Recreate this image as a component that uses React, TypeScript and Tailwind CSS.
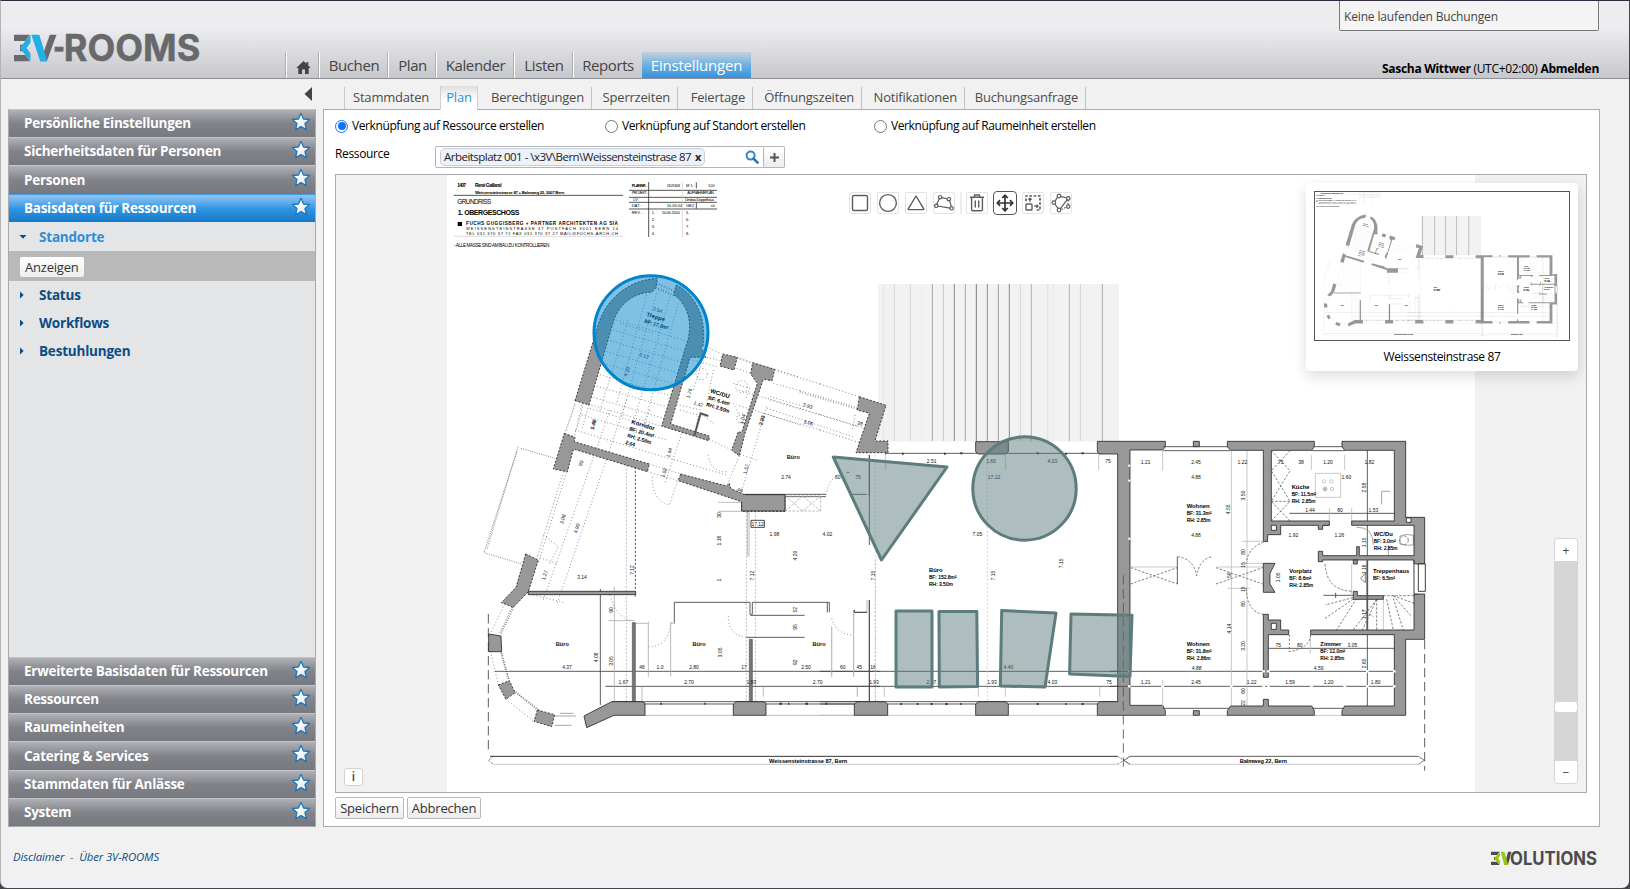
import React from "react";

const W = "#989898";

type Lbl = [number, number, string, number?];

function Dims({ items, size = 15, bold = false }: { items: Lbl[]; size?: number; bold?: boolean }) {
  return (
    <g fill="#111" stroke="none" fontSize={size} fontFamily="Liberation Sans, sans-serif" fontWeight={bold ? 700 : 400} textAnchor="middle">
      {items.map(([x, y, t, r], i) => (
        <text key={i} x={x} y={y + size * 0.35} transform={r ? `rotate(${r} ${x} ${y})` : undefined}>
          {t}
        </text>
      ))}
    </g>
  );
}

function Room({ x, y, lines, rot = 0, size = 17.5 }: { x: number; y: number; lines: string[]; rot?: number; size?: number }) {
  return (
    <g transform={`translate(${x} ${y}) rotate(${rot})`} fill="#000" stroke="none" fontFamily="Liberation Sans, sans-serif">
      {lines.map((l, i) => (
        <text key={i} x={0} y={i * 21 + 6} fontSize={i ? size - 2.5 : size} fontWeight={i ? 400 : 700} stroke={i ? "#000" : "none"} strokeWidth={0.5}>
          {l}
        </text>
      ))}
    </g>
  );
}

const hatch: [number, string][] = [
  [190, "#e6e6e6"], [223, "#d8d8d8"], [271, "#d6d6d6"], [304, "#ececec"], [337, "#a4a4a4"], [370, "#c8c8c8"],
  [403, "#888"], [436, "#a8a8a8"], [469, "#7c7c7c"], [502, "#8c8c8c"], [535, "#a0a0a0"], [568, "#888"],
  [601, "#d6d6d6"], [634, "#b0b0b0"], [683, "#e2e2e2"], [700, "#e6e6e6"], [748, "#b4b4b4"], [781, "#d4d4d4"], [847, "#aaa"],
];

function Plan({ mini = false }: { mini?: boolean }) {
  const ws = mini ? 0 : 2.4;
  const wall = { fill: W, stroke: "#222", strokeWidth: ws };
  const tilt = { fill: W, stroke: "#111", strokeWidth: ws, strokeDasharray: "6 5" };
  const lop = mini ? 0.35 : 1;
  return (
    <g>
      <rect x={878} y={284} width={241} height={157.5} fill="#f2f2f2" />
      {/* title block */}
      <g transform="translate(440 170) scale(.33333)">
        <g fill="#000" fontFamily="Liberation Sans, sans-serif" fontSize="15">
          <text x="52" y="50" textLength="26" fontWeight="700">1407</text>
          <text x="105" y="50" textLength="80" fontWeight="700">René Gailland</text>
          <text x="105" y="71" textLength="268" fontSize="13" fontWeight="700">Weissensteinstrasse 87 + Balmweg 22, 3007 Bern</text>
          <text x="52" y="103" textLength="102" fontSize="19">GRUNDRISS</text>
          <text x="53" y="136" textLength="185" fontSize="21" fontWeight="700">1. OBERGESCHOSS</text>
          <rect x="53" y="156" width="13" height="12" />
          <text x="78" y="166" textLength="456" fontSize="14" fontWeight="700">FUCHS GUGGISBERG + PARTNER ARCHITEKTEN AG SIA</text>
          <text x="78" y="180" textLength="456" fontSize="12">WEISSENSTEINSTRASSE 47 POSTFACH 3001 BERN 14</text>
          <text x="78" y="195" textLength="456" fontSize="12">TEL 031 370 37 71 FAX 031 370 37 27 MAIL@FUCHS-ARCH.CH</text>
          <text x="42" y="231" textLength="286" fontSize="14">- ALLE MASSE SIND AM BAU ZU KONTROLLIEREN</text>
          {!mini && (
            <g fontSize="12">
              <text x="575" y="50" textLength="44" fontWeight="700">PLANNR.</text><text x="680" y="50" textLength="40">1107403</text><text x="738" y="50">M 1 :</text><text x="804" y="50">100</text>
              <text x="575" y="71" textLength="48">PROJEKT :</text><text x="742" y="71" textLength="80">AUFNAHMEPLAN</text>
              <text x="580" y="92">LV</text><text x="735" y="92" textLength="88">Umbau Doppelhaus</text>
              <text x="575" y="112">DAT. :</text><text x="680" y="112">10.05.04</text><text x="738" y="112">GEZ</text><text x="812" y="112">sh</text>
              <text x="575" y="132">REV. :</text><text x="635" y="132">1.</text><text x="665" y="132" textLength="54">10.06.2004</text><text x="738" y="132">5.</text>
              <text x="635" y="153">2.</text><text x="738" y="153">6.</text><text x="635" y="174">3.</text><text x="738" y="174">7.</text><text x="635" y="195">4.</text><text x="738" y="195">8.</text>
            </g>
          )}
        </g>
        <path d="M41 76H549M567 61H831M567 82H831M567 97H831M567 117H831M626 36V201M769 37V55M769 98V116" stroke="#333" strokeWidth="2.5" opacity={lop} fill="none" />
        <path d="M41 199H549M727 36V201" stroke="#ccc" strokeWidth="2" fill="none" />
      </g>
      {/* terrace */}
      <g transform="translate(820 180) scale(.33333)">
        {hatch.filter((_, i) => !mini || i % 4 === 0).map(([x, c]) => (
          <rect key={x} x={x - 1.5} y={312} width={mini ? 8 : 3} height={471} fill={mini ? "#a5a5a5" : c} />
        ))}
        <path d="M0 612L118 650M0 703L145 748M0 750L135 793M105 705L97 750M0 612L-250 534M0 703L-250 628M0 750L-250 675" stroke="#555" strokeWidth="2.2" strokeDasharray="3 7" fill="none" opacity={lop} />
        <path d="M-60 635L114 686" stroke="#888" strokeWidth="9" strokeDasharray="2 6" fill="none" opacity={lop} />
        <path d="M118 650L198 676L165 783H204V818H108L148 700L112 690Z" {...tilt} />
      </g>
      {/* stair tower */}
      <g transform="translate(440 170) scale(.33333)">
        <g fill="none" stroke="#666" strokeWidth="2.2" strokeDasharray="3 7" opacity={lop}>
          <path d="M530 450L748 515M520 480L740 545M510 512L730 578M500 545L722 612M490 580L712 645M480 614L700 680M470 648L690 714M460 682L680 748M450 716L600 760" />
          <path d="M620 375L530 700M650 370L545 740M690 380L580 760M565 450L480 720M715 400L610 770M540 460L640 490" />
          <path d="M650 340L705 365M640 350L703 377" strokeWidth="7" strokeDasharray="2 6" />
          <path d="M808 535L845 552M892 562L936 578M1004 598L1080 622M800 562L840 572M890 595L932 610M1000 640L1080 662M990 680L1080 706M970 730L1080 765" />
          <path d="M405 700L380 780M447 705L425 780M430 700L410 780M720 720L775 735L765 790M750 562L700 720M760 570L830 590M820 600L800 700" />
          <circle cx="785" cy="612" r="17" /><circle cx="905" cy="650" r="18" /><circle cx="905" cy="745" r="15" /><path d="M785 580L760 660M880 640L930 655L915 690M700 700L780 720" />
        </g>
        <path d="M405 692L470 480C490 395 560 330 652 325L648 352L636 366C570 370 535 410 520 455L447 705Z" {...tilt} />
        <path d="M708 345C765 372 800 440 789 528L782 530L797 562L750 562L692 762L808 798L806 812L665 768L745 505C757 450 740 400 702 375Z" {...tilt} />
        <path d="M848 552L892 562L882 600L840 588Z" {...tilt} />
        <path d="M938 578L1004 598L996 632L970 628L915 790L898 858L875 840L895 785L905 788L952 640L932 612Z" {...tilt} />
        <path d="M763 797L782 730L805 738" stroke="#555" strokeWidth="6" fill="none" />
        <Room x={620} y={432} rot={17} lines={["Treppe", "BF: 17.0m²"]} />
        <Room x={812} y={662} rot={17} lines={["WC/DU", "BF: 6.4m²", "RH: 2.50m"]} />
        <Room x={575} y={755} rot={17} lines={["Korridor", "BF: 20.4m²", "RH: 2.58m", "2.64"]} size={18} />
        {!mini && (
          <Dims items={[[748, 670, "1.76", -73], [775, 703, "1.47", 17], [908, 747, "1.04", -73], [966, 750, "2.03", -73], [460, 765, "1.48", -73], [653, 420, "2.54", 17], [612, 557, "3.12", 17], [560, 605, "4.19", -73]]} />
        )}
      </g>
      {/* west wing */}
      <g transform="translate(460 400) scale(.33333)">
        <g fill="none" stroke="#666" strokeWidth="2.2" strokeDasharray="3 7" opacity={lop}>
          <path d="M345 15L313 100M365 15L343 112M385 12L650 92M365 45L620 120M345 90L610 170L800 225M450 30L250 600M500 0L290 615M310 215L232 470M340 150L235 490M250 405L295 440L270 490M230 470L295 492M220 585L310 607M568 192L662 222M562 215L655 242M668 92L615 250M748 118L815 150M838 168L800 258M920 20L840 290M890 180L815 155M930 0L1195 80M920 25L1180 110M570 30L545 90M760 70L720 40M820 10L850 70" />
          <path d="M183 145L285 175M175 140L72 458L185 492M170 155L80 450" strokeDasharray="3 4" stroke="#555" />
          <path d="M577 230Q575 300 628 315L655 235M745 165Q750 215 800 215M450 585Q470 660 525 662M565 740Q625 740 632 670M805 648Q805 712 870 712M1115 655Q1130 705 1180 705M1098 285Q1105 240 1140 220" />
          <path d="M130 620L92 700M155 622L118 700M92 755L115 855M123 755L148 842M138 898L222 964M165 878L240 930" />
          <path d="M162 872L240 935M124 760L146 840M160 622L122 702" strokeWidth="6" strokeDasharray="2 5" />
          <path d="M85 642V1050" strokeDasharray="28 14" stroke="#444" strokeWidth="2.6" />
          <path d="M499 195V905M859 335V905M886 335V905M1246 480V905" stroke="#aaa" strokeDasharray="6 5" />
          <path d="M526 200V570" stroke="#555" strokeDasharray="7 5" strokeWidth="3" />
        </g>
        <g fill="none" stroke="#444" strokeWidth="2.6" opacity={lop}>
          <path d="M104 814H1260M436 859H1260M421 567V915M643 670V607H870V643H877V607H1108V637M1102 607V637M871 646H1034M860 712H1034M850 283H975M975 283H1098M975 290H1098M1228 165V290M1228 600V905M555 912H820M918 912H1183M1183 637H1221M1183 630V637M205 528V574M526 584V590" />
          <path d="M455 905H1200" />
          <path d="M285 948H348M285 976H335M300 940H340" stroke="#999" />
        </g>
        <g fill="none" stroke="#aaa" strokeWidth="2.4" opacity={lop}>
          <path d="M463 560V920M565 665V830M632 665V830M526 670H565M632 670H643M862 335V470M867 335V470M1115 680V830M1181 637V830M446 662H520M555 946H820M918 946H1183M775 307H850M775 334H845M1221 637V600" />
          <path d="M976 288H1082V333H976ZM976 288L1028 333L1082 288M976 333L1028 288L1082 333" strokeDasharray="8 4" />
          <path d="M910 860V890M1192 860V890M546 860V905" />
        </g>
        <path d="M601 908h5v6h-5zM733 908h4v6h-4zM958 908h8v6h-8zM984 908h4v6h-4zM1036 908h8v6h-8zM1096 908h6v6h-6z" fill="#333" />
        <path d="M313 100L345 112L343 125L568 192L562 215L340 147L322 215L280 207Z" {...tilt} />
        <path d="M662 222L800 258L808 250L812 265L855 285H975V334H845V305L655 242Z" {...tilt} />
        <path d="M855 284H975V333H845V306" {...wall} />
        <path d="M197 462L235 480L205 575L160 622L124 608L168 562Z" {...tilt} />
        <path d="M205 574H527V584H205Z" {...wall} />
        <path d="M517 668H526V905H517ZM868 718H877V905H868Z" fill="#777" stroke="#555" strokeWidth="2" />
        <path d="M86 702L123 708L125 755H86Z" {...wall} />
        <path d="M115 855L148 842L165 878L138 898ZM232 930L284 944L275 980L222 964Z" {...tilt} />
        <path d="M372 948L455 905H546L555 910V946H462L380 983Z" {...wall} />
        <path d="M828 905H910L918 910V946H820V912Z" {...wall} />
        <Dims bold size={17} items={[[1000, 172, "Büro"], [307, 733, "Büro"], [717, 733, "Büro"], [1077, 733, "Büro"]]} />
        {!mini && <>
          <path d="M873 361H913V382H873Z" fill="#fff" stroke="#222" strokeWidth="2.5" />
          <Dims items={[[893, 372, "17.12"], [978, 232, "2.74"], [1133, 232, "60"], [1194, 232, "75"], [943, 403, "1.98"], [1102, 403, "4.02"], [366, 532, "3.14"], [321, 802, "4.37"], [546, 802, "46"], [600, 802, "1.0"], [702, 802, "2.80"], [852, 802, "17"], [1038, 802, "2.50"], [1148, 803, "60"], [1198, 803, "45"], [1239, 803, "16"], [490, 848, "1.67"], [687, 848, "2.70"], [874, 848, "1.93"], [1073, 848, "2.70"], [1242, 848, "1.93"],
            [410, 772, "4.08", -90], [453, 783, "3.05", -90], [453, 630, "90", -90], [779, 345, "30", -90], [779, 422, "1.16", -90], [779, 540, "1", -90], [781, 757, "3.05", -90], [878, 527, "7.12", -90], [1006, 467, "4.20", -90], [1006, 629, "52", -90], [1006, 681, "95", -90], [1006, 787, "92", -90], [1240, 527, "7.15", -90], [308, 357, "3.08", -73], [350, 385, "4.90", -73], [254, 525, "1.27", -73], [363, 190, "90", -73], [400, 72, "1.48", -73], [628, 158, "1.94", -73], [858, 207, "1.57", -73], [905, 62, "2.03", -73], [1043, 18, "2.93", 17], [1045, 68, "3.06", 17], [1200, 70, "38", 17], [612, 218, "1.02", -73], [840, 270, "46", 17], [517, 510, "7.12", -90]]} />
        </>}
      </g>
      {/* main hall */}
      <g transform="translate(820 430) scale(.33333)">
        <g fill="none" stroke="#444" strokeWidth="2.6" opacity={lop}>
          <path d="M0 724H900M0 769H900M148 75V345M148 510V815M0 815H905M0 822H112M203 822H475M557 822H839M197 70H475M557 70H839M197 66V74M839 66V74M102 547H141M102 540V547M80 127H88M95 193H141" />
          <path d="M-990 979H893" strokeWidth="3" stroke="#333" />
        </g>
        <g fill="none" stroke="#bbb" strokeWidth="2.4" opacity={lop}>
          <path d="M166 75V815M502 75V815" strokeDasharray="5 7" />
          <path d="M101 545V740M35 590V740M0 856H103M203 856H467M565 856H832M-980 1003H893M196 75V120M556 75V120M836 75V120M839 770V800M475 770V800M193 770V800M112 770V800M556 770V800" />
          <path d="M893 979L930 1003M893 1003L930 979M-980 979L-995 991L-980 1003" stroke="#555" strokeDasharray="6 4" />
        </g>
        <path d="M246 68h5v6h-5zM372 68h5v6h-5zM421 67h6v6h-6zM650 67h6v6h-6zM736 68h5v6h-5zM785 67h6v6h-6zM241 819h5v6h-5zM290 819h5v6h-5zM332 819h6v6h-6zM376 819h7v6h-7zM421 819h4v6h-4zM650 819h6v6h-6zM736 819h4v6h-4zM785 819h6v6h-6z" fill="#333" />
        <path d="M103 822L112 815H194L203 822V856H103ZM467 822L475 815H557L565 822V856H467ZM467 35H565V65L557 72H475L467 65Z" {...wall} />
        <path d="M832 34H1036V50L1028 60H930V826H1028L1036 842V856H832V822L839 815H893V72H839L832 66Z" {...wall} />
        <Room x={327} y={421} lines={["Büro", "BF: 152.8m²", "RH: 3.50m"]} />
        <text x="-153" y="998" fontSize="17" fontWeight="700" fontFamily="Liberation Sans, sans-serif" textLength="235">
          Weissensteinstrasse 87, Bern
        </text>
        {!mini && (
          <Dims items={[[335, 95, "2.51"], [513, 95, "1.60"], [697, 95, "4.03"], [864, 95, "75"], [522, 143, "17.12"], [472, 314, "7.05"], [565, 712, "4.40"], [334, 758, "2.87"], [516, 758, "1.93"], [697, 758, "4.03"], [867, 758, "75"], [520, 437, "7.15", -90], [723, 400, "7.15", -90]]} />
        )}
        <path d="M910 436V1022" stroke="#555" strokeWidth="2.6" strokeDasharray="28 14" />
      </g>
      {/* east house */}
      <g transform="translate(1110 430) scale(.33333)">
        <g fill="none" stroke="#444" strokeWidth="2.6" opacity={lop}>
          <path d="M0 724H870M0 769H870M475 655H870M772 45V842M538 250H870M202 380V462M160 50H360M605 50H704M160 62H360M605 62H704M160 835H360M605 835H704M640 496H730M677 488V504M60 979H925M638 286H658" />
        </g>
        <g fill="none" stroke="#bbb" strokeWidth="2.4" opacity={lop}>
          <path d="M364 60V828M411 60V828M158 60V122M158 750V828M604 75V120M704 75V120M395 334H460M395 400H460M395 475H410M60 411H202M320 411H460M60 1003H925M268 856H352M167 856H250M613 856H696M658 234V273M725 234V273M601 614V670M352 475H420M820 500V600M725 402V500" />
          <path d="M616 130H692V202H616Z" />
          <circle cx="642" cy="154" r="5" /><circle cx="664" cy="154" r="5" /><circle cx="645" cy="177" r="6" fill="#bbb" /><circle cx="666" cy="177" r="5" />
        </g>
        <g fill="none" stroke="#555" strokeWidth="2.3" strokeDasharray="7 5" opacity={lop}>
          <path d="M62 413L202 462M62 462L202 413M318 413L458 462M318 462L458 413M202 380Q250 385 260 437Q270 385 308 380M473 334Q415 345 409 400M409 475Q410 545 460 553M645 402Q650 480 725 484M538 614V665Q600 655 602 614" />
          <path d="M484 62L540 122L484 214L540 273M540 62L484 122L540 214L484 273M484 214H540" />
          <path d="M740 500L645 525M740 500L645 565M740 505L680 600M800 508V600M800 508L757 600M800 508L730 600M850 497L912 520M850 497L905 560M850 505L880 600M830 508L850 600M820 497H912M757 540L790 560" />
          <path d="M815 223V184H840M790 345Q790 290 740 292M835 345V377" strokeDasharray="none" stroke="#888" />
          <path d="M870 318Q890 310 910 316V345Q890 348 870 342Z" strokeDasharray="none" stroke="#888" /><circle cx="882" cy="331" r="13" />
          <path d="M766 430L752 445L766 458V430M925 979L943 991L925 1003M60 979L42 991L60 1003" strokeDasharray="none" />
        </g>
        <path d="M944 630V1022" stroke="#444" strokeWidth="2.6" strokeDasharray="28 14" />
        <path d="M250 34H268V50H250ZM250 842H268V856H250Z" {...wall} />
        <path d="M352 34H613V50L605 61H484V273H658V286H638V298H625V286H512V314H473V334H460V61H362L352 50Z" {...wall} />
        <path d="M696 34H887V262H944V402H912V390H638V395H625V364H638V377H740V350H748V377H912V286H725V273H853V61H704L696 50Z" {...wall} />
        <path d="M912 492H944V628H887V856H696V842L704 828H853V614H602V600H912Z" {...wall} />
        <path d="M730 390H742V402H730ZM730 484H742V497H820V508H730ZM460 400H495L480 430V462L495 487H460Z" {...wall} />
        <path d="M460 553H475V570H512V600H536V614H475V742H460ZM460 808H475V828H605L613 842V856H352V842L362 828H460Z" {...wall} />
        <path d="M772 392V600" stroke="#555" strokeWidth="5" opacity={lop} />
        <path d="M484 286H499V301H484ZM484 580H499V598H484ZM889 264H903V277H889Z" fill="#fff" stroke="#222" strokeWidth={ws} />
        <path d="M925 402H946V484H925ZM912 392V492H925" fill="#fff" stroke="#222" strokeWidth="2.6" />
        {!mini && (
          <g fill="#fff">
            {[58, 158, 364, 461, 475, 605, 704, 772, 853].map((x) => <circle key={x} cx={x} cy={769} r={4} />)}
            {[58, 461, 475, 772, 853].map((x) => <circle key={x} cx={x} cy={724} r={4} />)}
            {[107, 152, 326].map((y) => <circle key={y} cx={58} cy={y} r={3.5} />)}
          </g>
        )}
        <Room x={230} y={229} lines={["Wohnen", "BF: 31.3m²", "RH: 2.85m"]} />
        <Room x={230} y={643} lines={["Wohnen", "BF: 31.8m²", "RH: 2.86m"]} />
        <Room x={545} y={172} lines={["Küche", "BF: 11.5m²", "RH: 2.85m"]} />
        <Room x={791} y={313} lines={["WC/Du", "BF: 3.0m²", "RH: 2.85m"]} />
        <Room x={538} y={422} lines={["Vorplatz", "BF: 8.6m²", "RH: 2.85m"]} />
        <Room x={789} y={422} lines={["Treppenhaus", "BF: 6.5m²"]} />
        <Room x={631} y={643} lines={["Zimmer", "BF: 12.0m²", "RH: 2.85m"]} />
        <text x="389" y="998" fontSize="17" fontWeight="700" fontFamily="Liberation Sans, sans-serif" textLength="142">Balmweg 22, Bern</text>
        {!mini && (
          <Dims items={[[107, 97, "1.21"], [258, 97, "2.45"], [397, 97, "1.22"], [258, 143, "4.88"], [258, 316, "4.88"], [512, 97, "75"], [573, 97, "38"], [654, 97, "1.20"], [778, 97, "1.82"], [709, 142, "1.60"], [600, 240, "1.44"], [690, 240, "80"], [790, 240, "1.53"], [550, 316, "1.92"], [688, 316, "1.26"], [260, 714, "4.88"], [626, 714, "4.59"], [505, 645, "75"], [569, 645, "80"], [727, 645, "3.05"], [107, 758, "1.21"], [258, 758, "2.45"], [425, 758, "1.22"], [540, 758, "1.59"], [656, 758, "1.20"], [797, 758, "1.80"],
            [354, 238, "4.55", -90], [400, 197, "3.50", -90], [400, 366, "80", -90], [400, 405, "15", -90], [357, 436, "50", -90], [400, 478, "15", -90], [400, 522, "80", -90], [357, 596, "4.14", -90], [400, 648, "3.20", -90], [400, 783, "60", -90], [400, 819, "22", -90], [762, 173, "2.58", -90], [762, 337, "1.15", -90], [762, 418, "1.16", -90], [762, 553, "1.17", -90], [762, 700, "2.65", -90], [504, 442, "1.05", -90]]} />
        )}
      </g>
    </g>
  );
}

function Overlays() {
  const s = { fill: "rgba(93,124,126,0.5)", stroke: "#5d7c7e", strokeWidth: 3, strokeLinejoin: "round" as const };
  return (
    <g>
      <circle cx="651" cy="332.8" r="57" fill="rgba(0,132,203,0.5)" stroke="#0084cb" strokeWidth="3" />
      <path d="M833.3 457L947 467L881.5 560Z" {...s} />
      <circle cx="1024.5" cy="488.5" r="51.7" {...s} />
      <path d="M896 611H932V687H896ZM939 611.5H976.8L977.6 686.5L939.3 687ZM1001.7 610.5L1056 613L1045 687L1000.3 686ZM1071 614L1132 615.3L1130 676.5L1069.6 674Z" {...s} />
    </g>
  );
}

function Star() {
  return (
    <svg className="h-5 w-5" viewBox="0 0 20 20">
      <defs>
        <linearGradient id="starFill" x1="0" y1="0" x2="1" y2="1">
          <stop offset="0.4" stopColor="#fff" />
          <stop offset="1" stopColor="#d3d6da" />
        </linearGradient>
      </defs>
      <path d="M10 1.3L12.5 7L18.7 7.5L14 11.6L15.5 17.9L10 14.6L4.5 17.9L6 11.6L1.3 7.5L7.5 7Z" fill="url(#starFill)" stroke="#1c78bd" strokeWidth="1.3" strokeLinejoin="round" />
    </svg>
  );
}

function SideRow({ label, active = false, h = "h-[28px]" }: { label: string; active?: boolean; h?: string }) {
  return (
    <div
      className={`flex ${h} shrink-0 items-center justify-between border-t pr-[4px] pl-[15px] ${
        active ? "border-[#3f97dd] bg-linear-to-b from-[#92c5f3] via-[#2f96e2] to-[#1479c8]" : "border-[#c6c6ca] bg-linear-to-b from-[#b0b1b6] via-[#818389] to-[#777980]"
      }`}
    >
      <span className="text-[13.5px] font-bold tracking-[-0.27px] text-white">{label}</span>
      <span className="-mt-[4px]"><Star /></span>
    </div>
  );
}

function TreeRow({ label, open = false }: { label: string; open?: boolean }) {
  return (
    <div className={`flex h-[28px] items-center pl-[10px] ${open ? "pt-[2px] text-[#2a8fdc]" : "text-[#0b4c84]"}`}>
      <svg className="mr-[12px] h-[8px] w-[8px]" viewBox="0 0 8 8" fill="#0b4c84">
        {open ? <path d="M0.5 2H7.5L4 5.7Z" /> : <path d="M1 0.5V7.5L4.7 4Z" />}
      </svg>
      <span className="text-[13.5px] font-bold tracking-[-0.2px]">{label}</span>
    </div>
  );
}

const nav: [string, string][] = [
  ["Buchen", "w-[69px]"], ["Plan", "w-[48px]"], ["Kalender", "w-[78px]"], ["Listen", "w-[59px]"], ["Reports", "w-[69px]"],
];
const tabs: [string, string][] = [
  ["Berechtigungen", "w-[114px]"], ["Sperrzeiten", "w-[86px]"], ["Feiertage", "w-[75px]"], ["Öffnungszeiten", "w-[109px]"], ["Notifikationen", "w-[103px]"], ["Buchungsanfrage", "w-[121px]"],
];

function Tool({ children, active = false, cls = "" }: { children: React.ReactNode; active?: boolean; cls?: string }) {
  return (
    <span className={`flex shrink-0 items-center justify-center bg-white ${active ? "h-6 w-6 rounded-[4px] border border-[#555] text-[#333]" : "h-[22px] w-[22px] rounded-[2px] border border-[#e4e4e4] text-[#5c5c5c]"} ${cls}`}>
      <svg className="h-5 w-5 shrink-0" viewBox="0 0 20 20" fill="none" stroke="currentColor" strokeWidth="1.4" strokeLinejoin="round">
        {children}
      </svg>
    </span>
  );
}

function Radio({ label, on = false, cls }: { label: string; on?: boolean; cls: string }) {
  return (
    <label className={`flex shrink-0 items-center gap-[4px] ${cls}`}>
      <span className={`flex h-[13px] w-[13px] items-center justify-center rounded-full border bg-white ${on ? "border-[#0a75ff]" : "border-[#767676]"}`}>
        {on && <span className="h-[8px] w-[8px] rounded-full bg-[#0a75ff]" />}
      </span>
      <span className="text-[12px] tracking-[-0.4px] text-black">{label}</span>
    </label>
  );
}

export default function App() {
  return (
    <div className="h-[889px] w-[1630px] overflow-hidden bg-[#45454a] font-['Open_Sans','Noto_Sans',sans-serif]">
      <div className="relative flex h-[888px] w-[1629px] flex-col overflow-hidden rounded-b-[7px] border-t border-l border-t-[#2e2c3e] border-l-[#b4b4b6] bg-[#f1f1f1]">
        {/* header */}
        <header className="flex h-[78px] shrink-0 items-end border-b border-[#8f9095] bg-linear-to-b from-[#ededf0] from-35% to-[#c7c8cc]">
          <svg className="mb-[3px] ml-[12px] h-[44px] w-[192px] shrink-0" viewBox="13 31 192 44">
            <path d="M14 34.7H30L25.5 41H14ZM14 61.3H30L25.5 55H14Z" fill="#68696d" />
            <path d="M20 44.8H26V51.2H20Z" fill="#68696d" />
            <path d="M30.5 34.7V42.5L26.5 48L30.5 53.5V61.3L19.8 48Z" fill="#22aee6" />
            <path d="M49.8 34.7H56.5L46.8 61.3H40.5Z" fill="#68696d" />
            <path d="M31.3 34.7H39.3L47.3 61.3H40.2Z" fill="#22aee6" />
            <g fill="#68696d" stroke="#68696d" strokeWidth="0.5" fontSize="36.5" fontWeight="700" fontFamily="Inter, sans-serif">
              <text x="53" y="60" textLength="12" lengthAdjust="spacingAndGlyphs">-</text>
              <text x="63.8" y="61.3" textLength="136.5" lengthAdjust="spacingAndGlyphs">ROOMS</text>
            </g>
          </svg>
          <nav className="ml-[81px] flex h-[26px] text-[15px] tracking-[-0.4px] text-[#444]">
            <span className="flex w-[33px] items-center justify-center border-l border-white pt-[5px] shadow-[-1px_0_0_#aeafb3]">
              <svg className="h-[15px] w-[15px]" viewBox="0 0 15 15" fill="#444"><path d="M7.5 1L10.5 3.8V2H12.3V5.5L14.7 8H12.7V14H9V9.5H6V14H2.3V8H.3Z" /></svg>
            </span>
            {nav.map(([t, w]) => (
              <span key={t} className={`flex ${w} items-center justify-center border-l border-white shadow-[-1px_0_0_#aeafb3]`}>{t}</span>
            ))}
            <span className="flex w-[109px] items-center justify-center bg-linear-to-b from-[#c4d0dc] via-[#6cb0e2] to-[#3092db] tracking-[-0.2px] text-white">Einstellungen</span>
          </nav>
          <div className="mr-[30px] ml-auto flex h-full w-[260px] shrink-0 flex-col items-end justify-between">
            <div className="flex h-[30px] w-full items-center rounded-b-[2px] border border-t-0 border-[#77787c] bg-[#f4f4f4] pt-[2px] pl-[4px] text-[12px] tracking-[-0.15px] text-[#444]">Keine laufenden Buchungen</div>
            <div className="whitespace-nowrap text-[12px] tracking-[-0.3px] text-black"><b>Sascha Wittwer</b> (UTC+02:00) <b>Abmelden</b></div>
          </div>
        </header>

        <div className="flex h-[748px] shrink-0 pl-[7px]">
          {/* sidebar */}
          <aside className="flex w-[308px] shrink-0 flex-col">
            <div className="flex h-[30px] items-start justify-end pt-[8px] pr-[4px]">
              <svg className="h-[14px] w-[8px]" viewBox="0 0 8 14" fill="#444"><path d="M8 0V14L.5 7Z" /></svg>
            </div>
            <div className="flex flex-1 flex-col border border-t-0 border-[#a9aaaf] bg-[#e4e5e7]">
              <SideRow label="Persönliche Einstellungen" />
              <SideRow label="Sicherheitsdaten für Personen" />
              <SideRow label="Personen" h="h-[29px]" />
              <SideRow label="Basisdaten für Ressourcen" active />
              <TreeRow label="Standorte" open />
              <div className="mt-px flex h-[30px] items-center bg-[#b9b9b9] pt-px pl-[11px]">
                <span className="rounded-[2px] bg-linear-to-b from-white to-[#eee] px-[5px] py-px text-[13px] leading-[18px] tracking-[-0.2px] text-[#333]">Anzeigen</span>
              </div>
              <TreeRow label="Status" />
              <TreeRow label="Workflows" />
              <TreeRow label="Bestuhlungen" />
              <div className="flex-1" />
              <SideRow label="Erweiterte Basisdaten für Ressourcen" />
              <SideRow label="Ressourcen" />
              <SideRow label="Raumeinheiten" />
              <SideRow label="Catering & Services" h="h-[29px]" />
              <SideRow label="Stammdaten für Anlässe" />
              <SideRow label="System" />
            </div>
          </aside>

          {/* content */}
          <main className="ml-[7px] flex w-[1277px] shrink-0 flex-col">
            <div className="relative z-10 -mb-px flex h-[31px] items-end pl-[21px] text-[13px] tracking-[-0.2px] text-[#4c4c4c]">
              <span className="mb-px flex h-[22px] w-[96px] items-center border-l border-[#c8c8cb] pl-[8px]">Stammdaten</span>
              <span className="flex h-[24px] w-[38px] items-center justify-center border-x border-[#d0d0d3] bg-linear-to-b from-[#dedfe1] to-white to-60% text-[#2f90dd]">Plan</span>
              {tabs.map(([t, w]) => (
                <span key={t} className={`mb-px flex h-[22px] ${w} items-center justify-end border-r border-[#c3c3c7] pr-[7px]`}>{t}</span>
              ))}
            </div>
            <section className="flex flex-1 flex-col border border-[#a9aaaf] bg-white pl-[11px]">
              <div className="mt-[8px] flex h-[16px] items-center">
                <Radio label="Verknüpfung auf Ressource erstellen" on cls="w-[270px]" />
                <Radio label="Verknüpfung auf Standort erstellen" cls="w-[269px]" />
                <Radio label="Verknüpfung auf Raumeinheit erstellen" cls="w-[269px]" />
              </div>
              <div className="mt-[12px] flex h-[22px] items-center">
                <span className="mb-[6px] w-[100px] text-[12px] tracking-[-0.35px] text-black">Ressource</span>
                <div className="flex h-[22px] w-[329px] items-center rounded-l-[2px] border border-[#b5b5b8] bg-white pr-[4px] pl-[4px]">
                  <span className="flex h-[18px] items-center gap-[4px] whitespace-nowrap rounded-[5px] border border-[#c3d0e0] bg-[#edf1f8] px-[3px] text-[11.5px] tracking-[-0.52px] text-[#222]">
                    <span>Arbeitsplatz 001 - \x3V\Bern\Weissensteinstrase 87</span>
                    <b className="-mt-[2px] text-[11px] leading-none">x</b>
                  </span>
                  <svg className="ml-auto h-[14px] w-[14px]" viewBox="0 0 14 14" fill="none"><circle cx="5.6" cy="5.6" r="4" stroke="#3583c4" strokeWidth="2" /><path d="M8.6 8.6L12.6 12.6" stroke="#2c72b0" strokeWidth="2.6" strokeLinecap="round" /></svg>
                </div>
                <span className="flex h-[22px] w-[21px] items-center justify-center rounded-r-[2px] border border-l-0 border-[#b5b5b8] bg-linear-to-b from-white to-[#ececec]">
                  <svg className="h-[9px] w-[9px]" viewBox="0 0 9 9"><path d="M4.5 0V9M0 4.5H9" stroke="#555" strokeWidth="2" /></svg>
                </span>
              </div>

              <div className="relative mt-[6px] h-[619px] w-[1252px] overflow-hidden border border-[#a9aaaf] bg-[#f1f1f1]">
                <svg className="block h-[617px] w-[1250px]" viewBox="336 175 1250 617">
                  <rect x="447" y="175" width="1028" height="617" fill="#fff" />
                  <Plan />
                  <Overlays />
                </svg>

                <div className="absolute top-[16px] left-[513px] flex items-center">
                  <Tool><rect x="2.5" y="2.5" width="15" height="15" rx="1.5" /></Tool>
                  <Tool cls="ml-[6px]"><circle cx="10" cy="10" r="8.4" /></Tool>
                  <Tool cls="ml-[6px]"><path d="M10 3L17.6 15.6Q18 16.6 17 16.6H3Q2 16.6 2.4 15.6Z" /></Tool>
                  <Tool cls="ml-[6px]">
                    <g strokeWidth="1.2"><path d="M7.5 4.4L13.6 6M15.6 7.6L17.4 13.6M16 15.2L3.6 13M2.6 11.3L5.4 5.6" /><circle cx="6.2" cy="4.2" r="1.7" /><circle cx="14.8" cy="6.2" r="1.7" /><circle cx="2.3" cy="12.8" r="1.7" /><circle cx="17.6" cy="15.3" r="1.7" /></g>
                  </Tool>
                  <span className="ml-[5px] h-[22px] w-[2px] bg-[#ededed]" />
                  <Tool cls="ml-[4px]"><path d="M3 4.2H17M7.5 4V2H12.5V4M4.6 4.4V16.4Q4.6 17.8 6 17.8H14Q15.4 17.8 15.4 16.4V4.4M8.3 7.5V14.5M11.7 7.5V14.5" /></Tool>
                  <Tool active cls="ml-[5px]"><path d="M10 2V18M2 10H18M7.2 5L10 2.2L12.8 5M7.2 15L10 17.8L12.8 15M5 7.2L2.2 10L5 12.8M15 7.2L17.8 10L15 12.8" strokeWidth="1.7" /></Tool>
                  <Tool cls="ml-[5px]">
                    <path d="M3 8V3H17V17H12" strokeDasharray="2.6 1.6" strokeWidth="1.7" /><rect x="3" y="11" width="6" height="6" rx=".8" /><path d="M7 9V5.2M5.4 6.8L7 5.2L8.6 6.8M11 13.2H15M13.4 11.6L15 13.2L13.4 14.8" strokeWidth="1.3" />
                  </Tool>
                  <Tool cls="ml-[6px]">
                    <g strokeWidth="1.2"><path d="M4 8L6.6 4.2M9.8 3.4L15.8 5M3.8 11L7 15.4M16.2 6.6L9.4 15.6" /><path d="M10.5 16.4L16 13.8M17 7V11.5" strokeDasharray="1.5 1.5" /><circle cx="8" cy="3" r="1.8" /><circle cx="17.3" cy="5.4" r="1.7" /><circle cx="2.8" cy="9.6" r="1.8" /><circle cx="8" cy="17" r="1.8" /><circle cx="17.2" cy="13.6" r="1.7" /></g>
                  </Tool>
                </div>

                <div className="absolute top-[8px] left-[970px] flex h-[188px] w-[272px] flex-col items-center rounded-[4px] bg-white pt-[8px] shadow-[0_5px_14px_rgba(0,0,0,0.14)]">
                  <svg className="h-[150px] w-[256px] border border-[#555]" viewBox="1315 192 254 148">
                    <g transform="translate(1202.4 145.3) scale(.249)"><Plan mini /></g>
                  </svg>
                  <span className="mt-[7px] text-[12px] leading-[18px] tracking-[-0.35px] text-black">Weissensteinstrase 87</span>
                </div>

                <div className="absolute top-[363px] left-[1218px] flex h-[246px] w-[24px] flex-col items-stretch rounded-[4px] border border-[#d6d6d6] bg-[#d6d6d6] text-[12px] text-[#444]">
                  <span className="flex h-[22px] items-center justify-center rounded-t-[3px] bg-white pt-[2px]">+</span>
                  <span className="mt-[141px] h-[10px] rounded-[3px] bg-white" />
                  <span className="mt-auto flex h-[22px] items-center justify-center rounded-b-[3px] bg-white pt-px">−</span>
                </div>

                <span className="absolute top-[593px] left-[8px] flex h-[18px] w-[19px] items-center justify-center rounded-[3px] border border-[#d2d2d2] bg-white text-[12px] font-semibold text-[#444]">i</span>
              </div>

              <div className="mt-[4px] flex gap-[3px] text-[13px] tracking-[-0.2px] text-[#333]">
                <button className="flex h-[22px] w-[69px] items-center justify-center rounded-[2px] border border-[#b9b9bb] bg-linear-to-b from-white to-[#ededed] pt-px">Speichern</button>
                <button className="flex h-[22px] w-[74px] items-center justify-center rounded-[2px] border border-[#b9b9bb] bg-linear-to-b from-white to-[#ededed] pt-px">Abbrechen</button>
              </div>
            </section>
          </main>
        </div>

        <footer className="flex flex-1 items-start justify-between pt-[21px] pr-[29px] pl-[12px]">
          <span className="whitespace-pre text-[11.3px] leading-[18px] tracking-[-0.1px] text-[#0b4c84] italic">Disclaimer  <i className="text-[#888]">-</i>  Über 3V-ROOMS</span>
          <svg className="mt-[3px] h-[22px] w-[110px]" viewBox="1490 852 110 22">
            <path d="M1491 852.8H1499.5L1497 856H1491ZM1491 866H1499.5L1497 862.8H1491ZM1494 858H1497V861H1494Z" fill="#4b4b4d" />
            <path d="M1500 852.8V856.8L1498 859.4L1500 862V866L1494 859.4Z" fill="#97c80e" />
            <path d="M1508 852.8H1511.5L1508 866H1504.5Z" fill="#4b4b4d" />
            <path d="M1500.8 852.8H1504.4L1508.2 866H1504.2Z" fill="#97c80e" />
            <text x="1510" y="866" fontSize="18.2" fontWeight="700" fontFamily="Inter, sans-serif" fill="#4b4b4d" textLength="87" lengthAdjust="spacingAndGlyphs">OLUTIONS</text>
          </svg>
        </footer>
      </div>
    </div>
  );
}
